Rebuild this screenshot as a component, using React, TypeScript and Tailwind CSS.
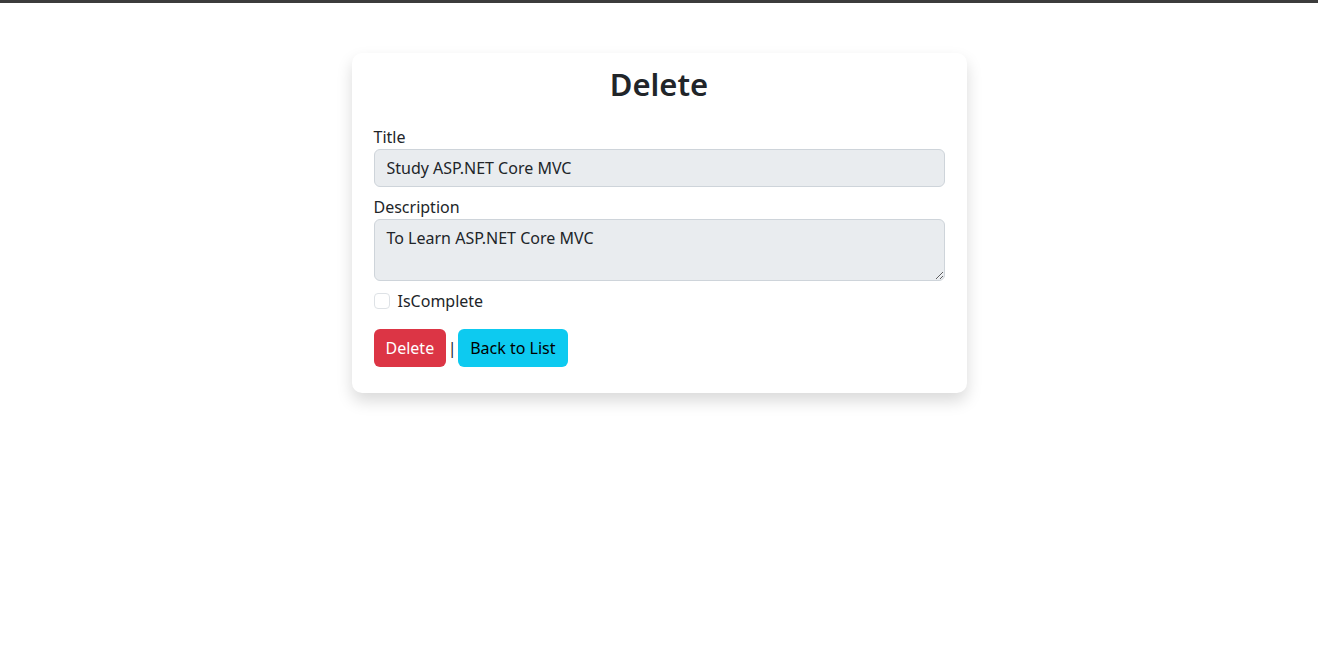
import React from "react";

const App = () => {
  return (
    <div className="min-h-screen bg-white font-['Noto_Sans',sans-serif] text-[#212529]">
      <div className="h-[3px] w-full bg-[#3c3c3c]" />
      <div className="flex justify-center pt-[50px]">
        <div className="w-[615px] rounded-[10px] bg-white px-[22px] pt-[12px] pb-[26px] shadow-[0_8px_16px_rgba(0,0,0,0.15)]">
          <h2 className="mb-[22px] text-center text-[31px] font-semibold leading-[38px]">
            Delete
          </h2>

          <label className="block text-base leading-6">Title</label>
          <input
            readOnly
            value="Study ASP.NET Core MVC"
            className="mb-2 block h-[38px] w-full rounded-md border border-[#ced4da] bg-[#e9ecef] px-3 text-base text-[#212529] outline-none"
          />

          <label className="block text-base leading-6">Description</label>
          <textarea
            readOnly
            value="To Learn ASP.NET Core MVC"
            className="mb-2 block h-[62px] w-full rounded-md border border-[#ced4da] bg-[#e9ecef] px-3 py-1.5 text-base leading-6 text-[#212529] outline-none"
          />

          <div className="flex h-6 items-center">
            <span className="h-4 w-4 rounded border border-[#dee2e6] bg-white" />
            <span className="ml-2 text-base leading-6">IsComplete</span>
          </div>

          <div className="mt-4 flex items-center">
            <button className="h-[38px] rounded-md bg-[#dc3545] px-3 text-base text-white">
              Delete
            </button>
            <span className="w-3 text-center text-base leading-6">|</span>
            <button className="h-[38px] rounded-md bg-[#0dcaf0] px-3 text-base text-black">
              Back to List
            </button>
          </div>
        </div>
      </div>
    </div>
  );
};

export default App;
